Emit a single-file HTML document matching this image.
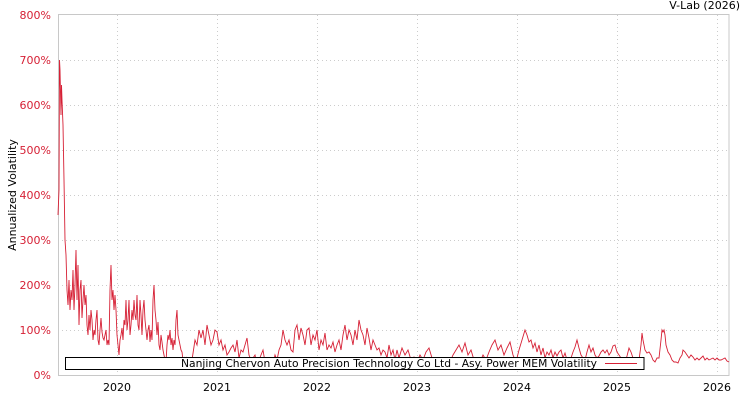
<!DOCTYPE html>
<html><head><meta charset="utf-8"><style>
html,body{margin:0;padding:0;background:#fff;width:750px;height:400px;overflow:hidden}
svg{display:block;font-family:"DejaVu Sans","Liberation Sans",sans-serif}
</style></head><body>
<svg width="750" height="400" viewBox="0 0 750 400">
<g stroke="#ccc" stroke-width="1" stroke-dasharray="1,3">
<line x1="58" y1="60.5" x2="729" y2="60.5"/><line x1="58" y1="105.5" x2="729" y2="105.5"/><line x1="58" y1="150.5" x2="729" y2="150.5"/><line x1="58" y1="195.5" x2="729" y2="195.5"/><line x1="58" y1="240.5" x2="729" y2="240.5"/><line x1="58" y1="285.5" x2="729" y2="285.5"/><line x1="58" y1="330.5" x2="729" y2="330.5"/>
<line x1="117.5" y1="15" x2="117.5" y2="375"/><line x1="217.5" y1="15" x2="217.5" y2="375"/><line x1="317.5" y1="15" x2="317.5" y2="375"/><line x1="417.5" y1="15" x2="417.5" y2="375"/><line x1="517.5" y1="15" x2="517.5" y2="375"/><line x1="617.5" y1="15" x2="617.5" y2="375"/><line x1="717.5" y1="15" x2="717.5" y2="375"/>
</g>
<rect x="58.5" y="14.5" width="670.5" height="361" fill="none" stroke="#c8c8c8"/>
<g fill="#d62035" font-size="11" text-anchor="end">
<text x="51" y="19">800%</text><text x="51" y="64">700%</text><text x="51" y="109">600%</text><text x="51" y="154">500%</text><text x="51" y="199">400%</text><text x="51" y="244">300%</text><text x="51" y="289">200%</text><text x="51" y="334">100%</text><text x="51" y="379">0%</text>
</g>
<g fill="#000" font-size="11" text-anchor="middle">
<text x="117" y="391">2020</text><text x="217" y="391">2021</text><text x="317" y="391">2022</text><text x="417" y="391">2023</text><text x="517" y="391">2024</text><text x="617" y="391">2025</text><text x="717" y="391">2026</text>
</g>
<text x="740" y="9" font-size="11" text-anchor="end" fill="#000">V-Lab (2026)</text>
<text transform="translate(16,195) rotate(-90)" font-size="11" text-anchor="middle" fill="#000">Annualized Volatility</text>
<polyline fill="none" stroke="#d62035" stroke-width="0.9" points="58,215 59,190 59.5,60 60,70 61,115 61.5,85 62,100 63,125 64,180 65,240 66,255 67,290 68,305 69,280 70,310 71,290 72,300 73,270 74,310 75,285 76,250 77,300 78,265 79,325 80,290 81,280 82,318 83,300 84,285 85,305 86,295 87,325 88,335 89,315 90,330 91,310 92,320 93,340 94,330 95,335 96,320 97,310 98,340 99,345 100,330 101,318 102,332 103,338 104,340 105,335 106,330 107,345 108,340 109,345 110,290 111,265 112,300 113,290 114,310 115,295 116,310 117,335 118,345 119,355 120,340 121,335 122,328 123,340 124,320 125,325 126,300 127,330 128,320 129,300 130,335 131,325 132,310 133,320 134,300 135,315 136,320 137,295 138,325 139,330 140,300 141,315 142,335 143,310 144,300 145,320 146,330 147,340 148,330 149,325 150,342 151,330 152,340 153,300 154,285 155,310 156,320 157,335 158,322 159,345 160,350 161,335 162,342 163,350 164,355 165,360 166,362 167,345 168,335 169,340 170,330 171,345 172,338 173,350 174,340 175,345 176,320 177,310 178,335 179,340 180,345 181,350 182,352 183,360 184,358 185,365 186,365 187,358 190,365 192,360 195,340 197,345 199,330 201,338 203,330 205,345 207,325 209,335 211,345 213,340 215,330 217,332 219,345 221,340 223,350 225,345 227,355 229,352 231,348 233,345 235,352 237,340 239,358 241,350 243,352 245,345 247,338 249,355 251,360 253,358 255,355 257,365 259,360 261,355 263,350 265,362 267,363 269,360 271,362 273,365 275,355 277,360 279,350 281,345 283,330 285,340 287,345 289,340 291,350 293,352 295,330 297,325 299,340 301,328 303,335 305,345 307,330 309,328 311,345 313,335 315,340 317,330 319,350 321,340 323,345 325,333 327,350 329,345 331,348 333,342 335,352 337,345 339,340 341,350 343,335 345,325 347,340 349,330 351,335 353,345 355,330 357,340 359,320 361,330 363,335 365,345 367,328 369,338 371,350 373,340 375,345 377,350 379,348 381,355 383,350 385,352 387,358 389,345 391,355 393,350 395,360 397,350 399,358 402,348 405,355 408,350 411,360 414,357 417,362 420,355 423,360 426,352 429,348 432,358 435,362 438,358 441,362 444,365 447,358 450,362 453,355 456,350 459,345 462,352 465,343 468,355 471,350 474,360 477,358 480,362 483,355 486,360 489,352 492,345 495,340 498,350 501,345 504,355 507,348 510,342 513,355 516,362 519,350 522,340 525,330 527,335 529,342 531,340 533,348 535,343 537,352 539,345 541,355 543,348 545,358 547,352 549,355 551,350 553,358 555,352 557,356 559,352 561,350 563,358 565,353 567,360 569,362 571,358 573,352 575,347 577,340 579,348 581,355 583,358 585,360 587,352 589,345 591,352 593,348 595,355 597,358 599,356 601,352 603,350 605,353 607,350 609,355 611,352 613,346 615,345 617,352 619,355 621,358 623,360 625,362 627,356 629,348 631,352 633,358 635,360 637,362 639,360 641,345 642,333 643,340 645,350 647,353 649,352 651,355 653,360 655,362 657,358 659,358 661,340 662,330 663,332 664,330 665,335 666,345 668,352 670,355 672,360 674,362 676,362 678,363 680,358 682,355 683,350 685,352 687,355 689,358 691,355 693,357 695,360 697,358 699,360 701,358 703,356 705,360 707,358 709,360 711,359 713,358 715,360 717,358 719,360 721,360 723,359 725,358 727,361 729,362"/>
<rect x="65.5" y="357.5" width="578.5" height="12" fill="#fff" stroke="#000"/>
<text x="181" y="367" font-size="11" fill="#000" textLength="416" lengthAdjust="spacingAndGlyphs">Nanjing Chervon Auto Precision Technology Co Ltd - Asy. Power MEM Volatility</text>
<line x1="605" y1="363.5" x2="637" y2="363.5" stroke="#d62035" stroke-width="1"/>
</svg>
</body></html>
